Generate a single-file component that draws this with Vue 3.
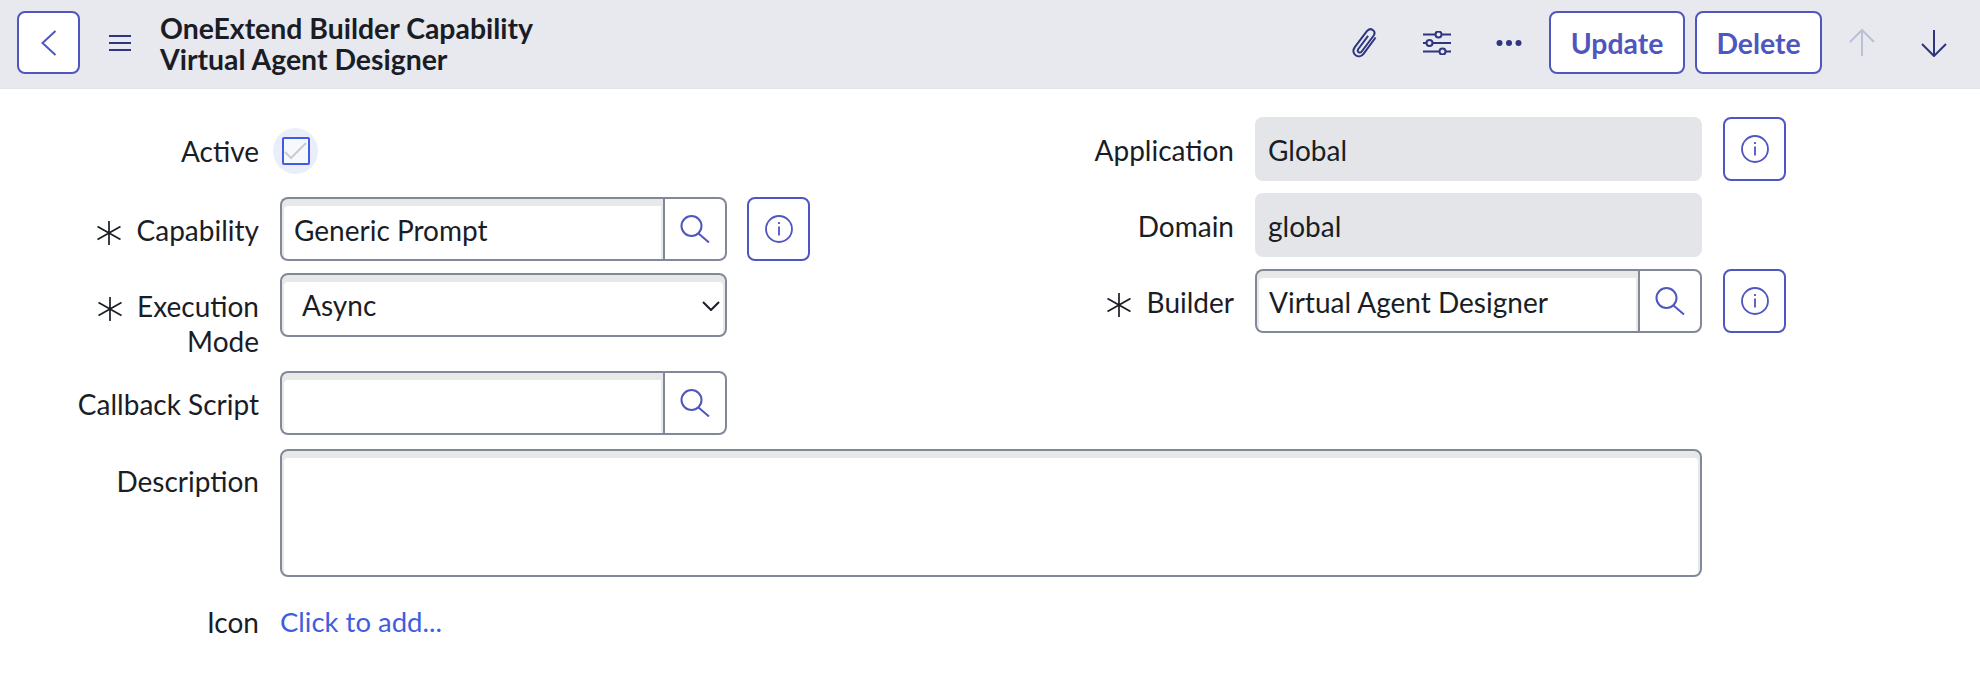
<template>
  <div class="page">
    <!-- Header -->
    <header class="header">
      <button class="back-btn" aria-label="Back">
        <svg width="16" height="26" viewBox="0 0 16 26"><path d="M14.5 1 1.5 13l13 12" /></svg>
      </button>
      <button class="menu-btn" aria-label="Menu">
        <svg width="22" height="16" viewBox="0 0 22 16"><path d="M0 1h22M0 8h22M0 15h22" /></svg>
      </button>
      <div class="title">
        <div>OneExtend Builder Capability</div>
        <div>Virtual Agent Designer</div>
      </div>

      <div class="actions">
        <button class="icon-btn" aria-label="Attachments">
          <svg width="28" height="30" viewBox="0 0 28 30">
            <path d="M24.6 9.5 12.7 25.6c-2.2 3-5.6 3.5-8.1 1.7-2.5-1.8-3-5.2-.8-8.2L15.9 3.2c1.6-2.1 4-2.5 5.9-1.200 1.900 1.400 2.200 3.800.600 6L10.700 23.500c-.9 1.200-2.200 1.400-3.100.7-1-.7-1.200-2-.3-3.200l9.800-13.100" />
          </svg>
        </button>
        <button class="icon-btn" aria-label="Settings">
          <svg width="28" height="24" viewBox="0 0 28 24">
            <path d="M0 3.500h12M19 3.500h9M0 12h3M10 12h18M0 20.500h16M23 20.500h5" />
            <circle cx="15.500" cy="3.500" r="3" />
            <circle cx="6.500" cy="12" r="3" />
            <circle cx="19.500" cy="20.500" r="3" />
          </svg>
        </button>
        <button class="icon-btn" aria-label="More">
          <svg width="26" height="6" viewBox="0 0 26 6" class="solid">
            <circle cx="3.500" cy="3" r="3" />
            <circle cx="13" cy="3" r="3" />
            <circle cx="22.500" cy="3" r="3" />
          </svg>
        </button>
        <button class="text-btn update">Update</button>
        <button class="text-btn delete">Delete</button>
        <button class="icon-btn faded" aria-label="Previous">
          <svg width="26" height="28" viewBox="0 0 26 28"><path d="M13 27V1M1 13 13 1l12 12" /></svg>
        </button>
        <button class="icon-btn" aria-label="Next">
          <svg width="26" height="28" viewBox="0 0 26 28"><path d="M13 1v26M1 15l12 12 12-12" /></svg>
        </button>
      </div>
    </header>

    <!-- Form -->
    <form class="form" @submit.prevent>
      <div class="columns">
        <div class="col-left">
          <div class="row row-active">
            <label class="label">Active</label>
            <span class="check-halo">
              <span class="check-box">
                <svg width="23" height="19" viewBox="0 0 23 19"><path d="M1 10l6 6L22 1" /></svg>
              </span>
            </span>
          </div>

          <div class="row">
            <label class="label">
              <svg class="star" viewBox="0 0 24 24"><path :d="starPath" /></svg>
              Capability
            </label>
            <div class="lookup">
              <input class="field" type="text" value="Generic Prompt" />
              <button class="lookup-btn" aria-label="Search">
                <svg class="search-icon" viewBox="0 0 30 28"><circle cx="11.500" cy="11" r="10" /><path d="M18.500 18.500 29 27.500" /></svg>
              </button>
            </div>
            <button class="info-btn" aria-label="Info">
              <svg class="info-icon" viewBox="0 0 28 28"><circle cx="14" cy="14" r="13" /><path d="M14 11.500v9M14 7v2" /></svg>
            </button>
          </div>

          <div class="row row-select">
            <label class="label">
              <svg class="star" viewBox="0 0 24 24"><path :d="starPath" /></svg>
              Execution<br />Mode
            </label>
            <div class="select-wrap">
              <select class="field select">
                <option>Async</option>
                <option>Sync</option>
              </select>
              <svg class="chevron" width="18" height="10" viewBox="0 0 18 10"><path d="M1 1l8 8 8-8" /></svg>
            </div>
          </div>

          <div class="row">
            <label class="label">Callback Script</label>
            <div class="lookup">
              <input class="field" type="text" />
              <button class="lookup-btn" aria-label="Search">
                <svg class="search-icon" viewBox="0 0 30 28"><circle cx="11.500" cy="11" r="10" /><path d="M18.500 18.500 29 27.500" /></svg>
              </button>
            </div>
          </div>
        </div>

        <div class="col-right">
          <div class="row">
            <label class="label">Application</label>
            <div class="readonly">Global</div>
            <button class="info-btn" aria-label="Info">
              <svg class="info-icon" viewBox="0 0 28 28"><circle cx="14" cy="14" r="13" /><path d="M14 11.500v9M14 7v2" /></svg>
            </button>
          </div>
          <div class="row">
            <label class="label">Domain</label>
            <div class="readonly">global</div>
          </div>
          <div class="row">
            <label class="label">
              <svg class="star" viewBox="0 0 24 24"><path :d="starPath" /></svg>
              Builder
            </label>
            <div class="lookup">
              <input class="field" type="text" value="Virtual Agent Designer" />
              <button class="lookup-btn" aria-label="Search">
                <svg class="search-icon" viewBox="0 0 30 28"><circle cx="11.500" cy="11" r="10" /><path d="M18.500 18.500 29 27.500" /></svg>
              </button>
            </div>
            <button class="info-btn" aria-label="Info">
              <svg class="info-icon" viewBox="0 0 28 28"><circle cx="14" cy="14" r="13" /><path d="M14 11.500v9M14 7v2" /></svg>
            </button>
          </div>
        </div>
      </div>

      <div class="row row-desc">
        <label class="label">Description</label>
        <textarea class="field area"></textarea>
      </div>

      <div class="row row-icon">
        <label class="label">Icon</label>
        <a class="add-link" href="#" @click.prevent>Click to add...</a>
      </div>
    </form>
  </div>
</template>

<script setup>
// Required marker, six thin rays
const starPath = "M12 0v24M.5 5.500l23 13M23.500 5.500l-23 13";
</script>

<style>
html,
body {
  margin: 0;
  background: #fff;
}
</style>

<style scoped>
.page {
  height: 686px;
  overflow: hidden;
  font-family: Lato, "Liberation Sans", sans-serif;
  font-size: 28px;
  color: #1a1d26;
}

button {
  font-family: inherit;
  padding: 0;
  background: none;
  border: 0;
}

svg path,
svg circle {
  fill: none;
  stroke: currentColor;
}

/* Header */
.header {
  display: flex;
  align-items: center;
  height: 89px;
  padding: 0 10px 3px 17px;
  box-sizing: border-box;
  background: #e8e9ee;
  border-bottom: 1px solid #e2e3e7;
}

.back-btn {
  display: flex;
  align-items: center;
  justify-content: center;
  width: 63px;
  height: 63px;
  background: #fff;
  border: 2px solid #4f56bd;
  border-radius: 8px;
  color: #4f56bd;
  margin-right: 29px;
}

.back-btn path {
  stroke-width: 2;
}

.menu-btn {
  display: flex;
  width: 22px;
  color: #2f3580;
  margin-right: 29px;
}

.menu-btn path {
  stroke-width: 2;
}

.title {
  margin-top: 2px;
  font-size: 28.400px;
  font-weight: 700;
  line-height: 31px;
}

.actions {
  display: flex;
  align-items: center;
  margin-left: auto;
}

.icon-btn {
  display: flex;
  align-items: center;
  justify-content: center;
  width: 72px;
  height: 63px;
  color: #2f3580;
}

.icon-btn path,
.icon-btn circle {
  stroke-width: 2;
}

.icon-btn .solid circle {
  fill: currentColor;
  stroke: none;
}

.faded {
  color: #bcbfd6;
}

.text-btn {
  height: 63px;
  box-sizing: border-box;
  background: #fff;
  border: 2px solid #4f56bd;
  border-radius: 8px;
  color: #4f56bd;
  font-size: 28.400px;
  font-weight: 700;
}

.update {
  width: 136px;
  margin-left: 4px;
}

.delete {
  width: 127px;
  margin-left: 10px;
  margin-right: 4px;
}

/* Form */
.form {
  padding-top: 28px;
}

.columns {
  display: flex;
}

.col-left {
  width: 990px;
}

.col-left .info-btn {
  margin-left: 20px;
}

.col-right .label {
  width: 244px;
}

.row {
  display: flex;
  margin-bottom: 12px;
}

.label {
  flex: none;
  box-sizing: border-box;
  width: 259px;
  margin-right: 21px;
  padding-top: 16px;
  line-height: 35px;
  text-align: right;
}

.star {
  width: 24px;
  height: 24px;
  margin-right: 8px;
  vertical-align: -4px;
}

.star path {
  stroke-width: 1.700;
}

.row-active {
  height: 68px;
  align-items: center;
}

.row-active .label {
  padding-top: 0;
}

.check-halo {
  display: flex;
  align-items: center;
  justify-content: center;
  width: 45px;
  height: 46px;
  margin-left: -7px;
  border-radius: 50%;
  background: #ebedfa;
}

.check-box {
  display: flex;
  align-items: center;
  justify-content: center;
  width: 28px;
  height: 28px;
  box-sizing: border-box;
  border: 2.500px solid #3f5de0;
  border-radius: 2px;
  background: #f7f8fb;
  color: #c9ccd2;
}

.check-box path {
  stroke-width: 2;
}

.field {
  box-sizing: border-box;
  margin: 0;
  border: 2px solid #82889a;
  border-radius: 8px;
  background: #fff;
  box-shadow: inset 0 5px 0 2px #e7e9e9;
  font-family: inherit;
  font-size: 28px;
  color: #1a1d26;
  outline: none;
}

.lookup {
  display: flex;
  width: 447px;
  height: 64px;
}

.lookup .field {
  flex: 1;
  min-width: 0;
  padding: 2px 12px 0;
  border-right: 0;
  border-radius: 8px 0 0 8px;
}

.lookup-btn {
  display: flex;
  flex: none;
  align-items: center;
  justify-content: center;
  width: 64px;
  box-sizing: border-box;
  border: 2px solid #82889a;
  border-radius: 0 8px 8px 0;
  background: #fff;
}

.search-icon {
  width: 30px;
  height: 28px;
  color: #4f56bd;
}

.search-icon path,
.search-icon circle {
  stroke-width: 2;
}

.info-btn {
  display: flex;
  align-items: center;
  justify-content: center;
  width: 63px;
  height: 64px;
  margin-left: 21px;
  box-sizing: border-box;
  background: #fff;
  border: 2px solid #4f56bd;
  border-radius: 8px;
  color: #4f56bd;
}

.info-icon {
  width: 28px;
  height: 28px;
}

.info-icon path,
.info-icon circle {
  stroke-width: 1.800;
}

.row-select {
  height: 86px;
}

.select-wrap {
  position: relative;
  width: 447px;
  height: 64px;
}

.select {
  display: block;
  width: 100%;
  height: 100%;
  padding: 0 0 0 20px;
  appearance: none;
}

.chevron {
  position: absolute;
  top: 28px;
  right: 7px;
  color: #1a1d26;
}

.chevron path {
  stroke-width: 2;
}

.col-right {
  flex: none;
}

.readonly {
  box-sizing: border-box;
  width: 447px;
  height: 64px;
  padding: 0 13px;
  border-radius: 8px;
  background: #e4e5e9;
  line-height: 66px;
}

.row-desc {
  margin-top: 2px;
  margin-bottom: 0;
}

.row-desc .label {
  padding-top: 15px;
}

.area {
  display: block;
  width: 1422px;
  height: 128px;
  resize: none;
}

.row-icon {
  margin-top: 23px;
}

.row-icon .label {
  padding-top: 5px;
}

.add-link {
  padding-top: 4px;
  font-size: 27.500px;
  line-height: 35px;
  color: #3f5de0;
  text-decoration: none;
}
</style>
